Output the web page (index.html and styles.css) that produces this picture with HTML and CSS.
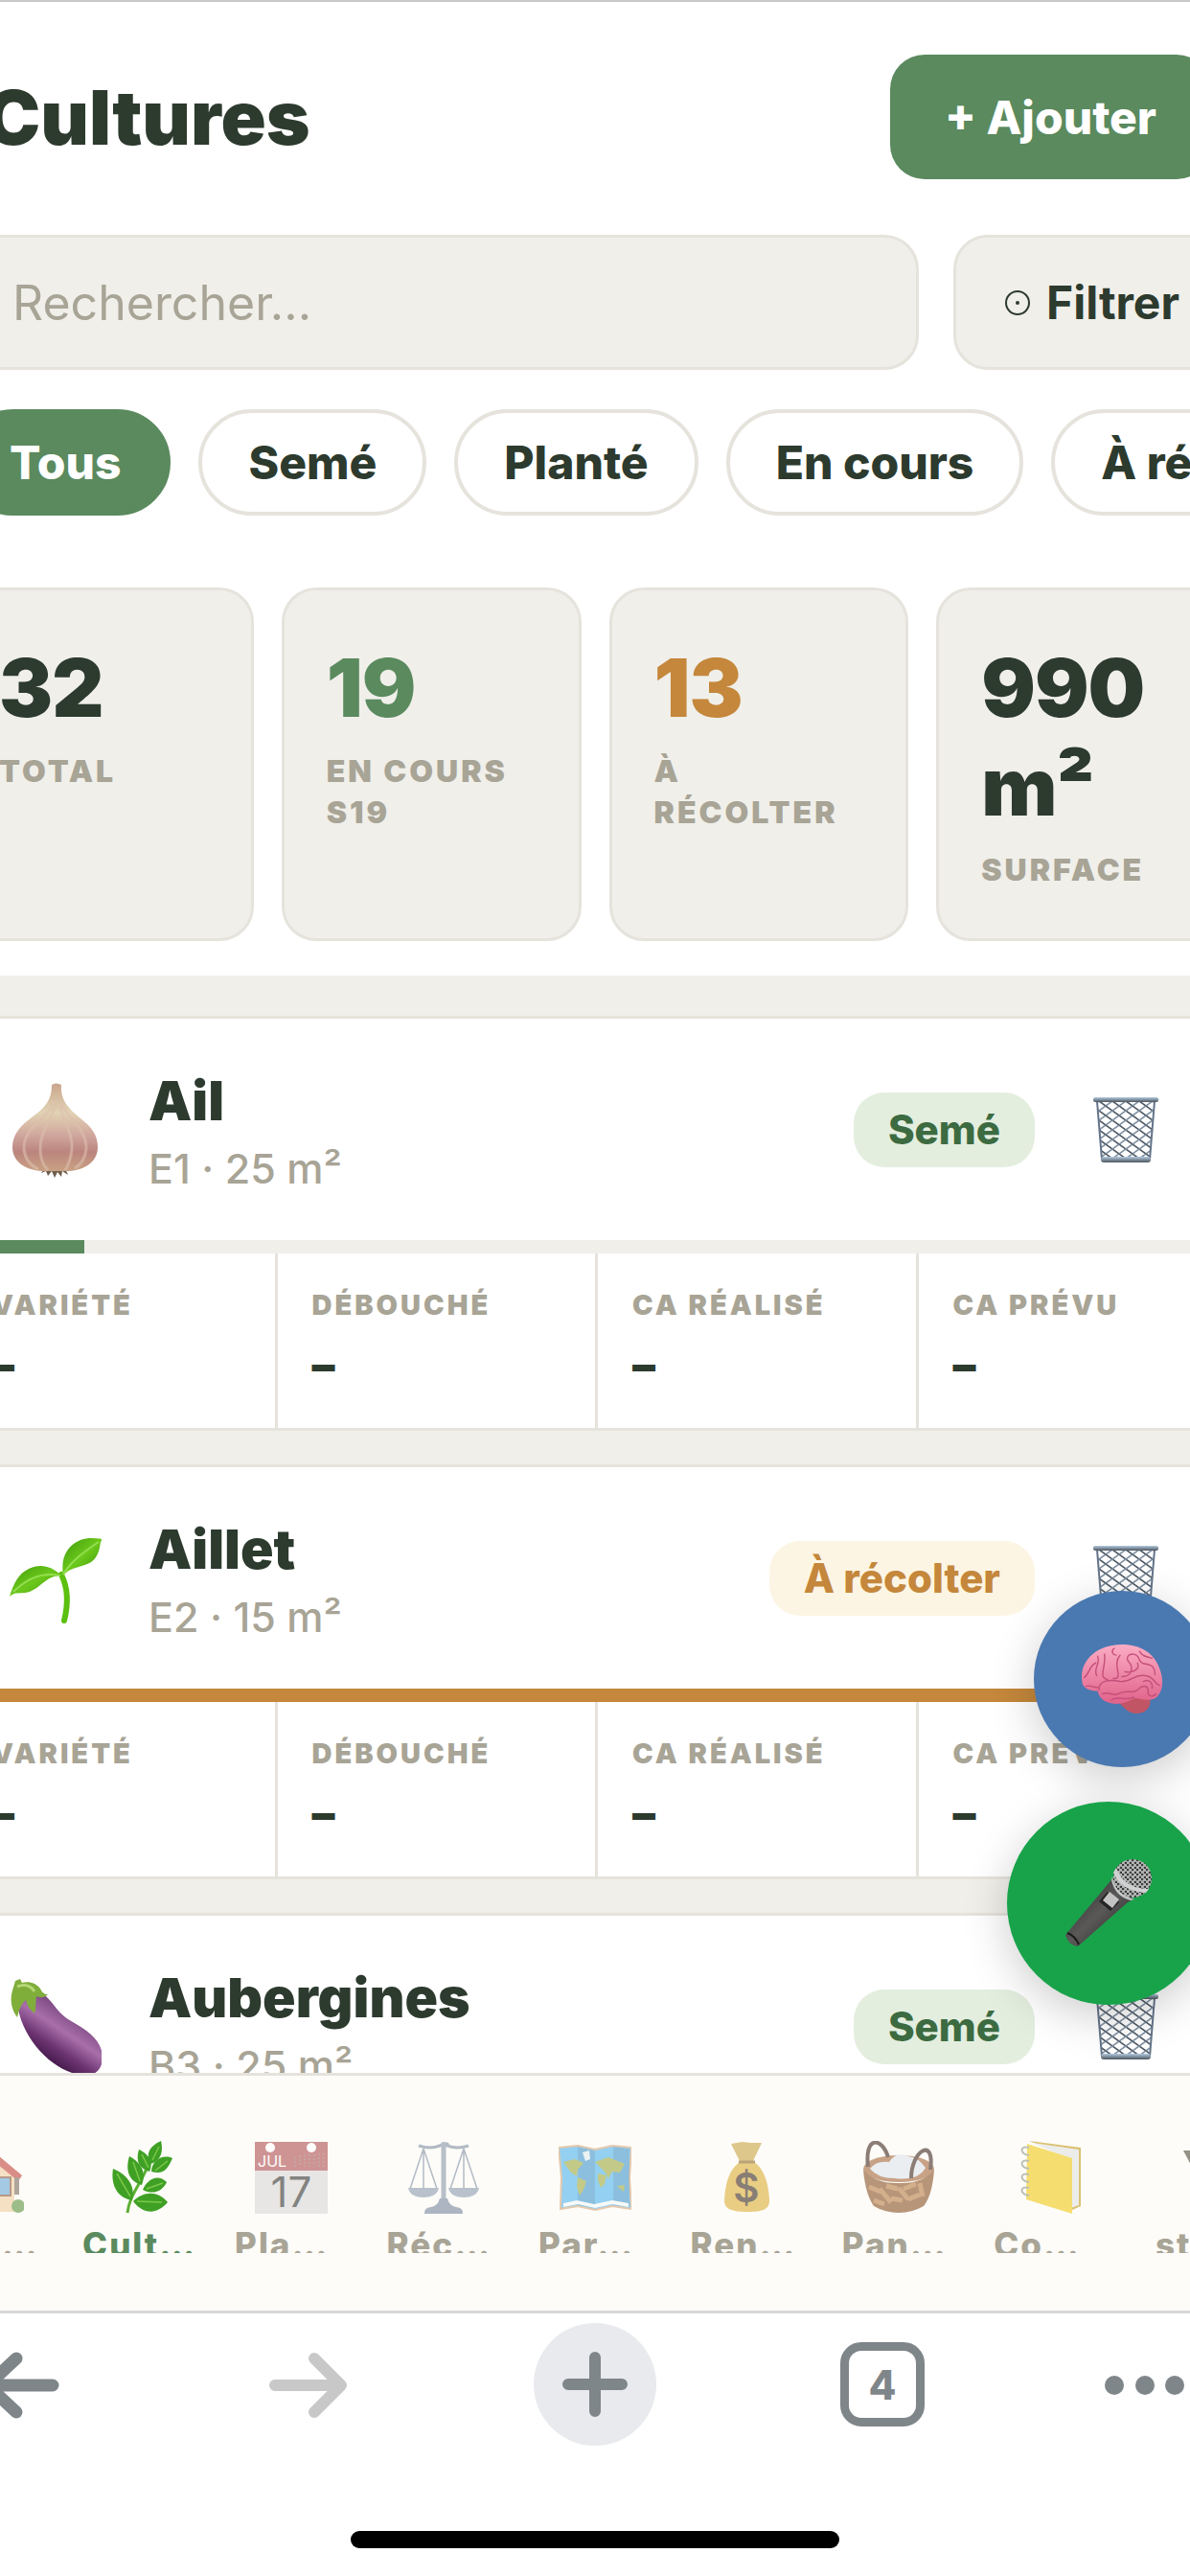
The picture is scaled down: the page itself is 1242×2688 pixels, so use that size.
FILE: index.html
```html
<!DOCTYPE html>
<html lang="fr">
<head>
    <meta charset="UTF-8">
    <meta name="viewport" content="width=device-width, initial-scale=1.0">
    <title>Cultures</title>
    <link rel="stylesheet" href="styles.css">
</head>
<body>
    <!-- icônes réutilisées -->
    <svg class="defs" aria-hidden="true">
        <defs>
            <pattern id="mesh" width="14" height="10" patternUnits="userSpaceOnUse">
                <path d="M0 0L14 10" stroke="#4d5863" stroke-width="1.6"/>
                <path d="M14 0L0 10" stroke="#7f90a2" stroke-width="1.6"/>
            </pattern>
            <linearGradient id="rim" x1="0" x2="0" y1="0" y2="1">
                <stop offset="0" stop-color="#b4cbe0"/>
                <stop offset="1" stop-color="#4c555f"/>
            </linearGradient>
            <symbol id="trash" viewBox="0 0 70 70">
                <path d="M5 5H65L60 66H10Z" fill="url(#mesh)"/>
                <path d="M5 5L10 66M65 5L60 66" stroke="#64748a" stroke-width="2"/>
                <rect x="1" y="1" width="68" height="5" rx="2" fill="url(#rim)"/>
                <rect x="9" y="63" width="52" height="6" rx="3" fill="url(#rim)"/>
            </symbol>
        </defs>
    </svg>

    <div class="screen">
        <main class="main">
            <div class="app">
                <header class="header">
                    <div class="title-row">
                        <h1>Cultures</h1>
                        <button class="btn-add">+ Ajouter</button>
                    </div>
                    <div class="search-row">
                        <input class="search" type="text" placeholder="Rechercher..." aria-label="Rechercher">
                        <button class="btn-filter">
                            <svg width="28" height="28" viewBox="0 0 28 28"><circle cx="14" cy="14" r="12" fill="none" stroke="#2d3a2e" stroke-width="2"/><circle cx="14" cy="14" r="2" fill="#2d3a2e"/></svg>
                            Filtrer
                        </button>
                    </div>
                    <div class="pills">
                        <button class="pill active">Tous</button>
                        <button class="pill">Semé</button>
                        <button class="pill">Planté</button>
                        <button class="pill">En cours</button>
                        <button class="pill">À récolter</button>
                    </div>
                    <div class="stats">
                        <div class="stat">
                            <div class="num">32</div>
                            <div class="lbl">Total</div>
                        </div>
                        <div class="stat">
                            <div class="num green">19</div>
                            <div class="lbl">En cours S19</div>
                        </div>
                        <div class="stat">
                            <div class="num orange">13</div>
                            <div class="lbl">À récolter</div>
                        </div>
                        <div class="stat">
                            <div class="num">990 m²</div>
                            <div class="lbl">Surface</div>
                        </div>
                    </div>
                </header>

                <section class="list">
                    <article class="card">
                        <div class="card-top">
                            <svg class="emoji" viewBox="0 0 96 100">
                                <defs>
                                    <linearGradient id="bulb" x1="0" x2="0" y1="0" y2="1">
                                        <stop offset="0" stop-color="#c9a58c"/>
                                        <stop offset=".33" stop-color="#e2d3b4"/>
                                        <stop offset=".6" stop-color="#cfa59c"/>
                                        <stop offset=".78" stop-color="#bb857e"/>
                                        <stop offset="1" stop-color="#c9a183"/>
                                    </linearGradient>
                                </defs>
                                <path d="M36 91l-3 4 5-2 2 5 4-5 3 7 3-6 4 5 1-6 6 4-3-7z" fill="#6f5d4c"/>
                                <path d="M44 3q4-3 10 0c-1 16 7 24 20 35 12 9 18 18 18 30 0 15-13 24-30 25H34C16 92 3 83 3 68c0-13 8-22 20-31 14-10 21-18 21-34z" fill="url(#bulb)"/>
                                <path d="M47 22C37 40 14 48 15 70c1 10 6 17 15 21M48 24C42 42 32 52 32 70c0 9 3 17 8 22M52 24c5 18 14 30 13 46-1 9-3 16-7 22M53 22c9 16 28 28 27 48-1 10-5 16-12 20" fill="none" stroke="#dcbfae" stroke-width="3" opacity=".6"/>
                            </svg>
                            <div class="info">
                                <h2>Ail</h2>
                                <p>E1 · 25 m²</p>
                            </div>
                            <span class="badge seme">Semé</span>
                            <button class="del" aria-label="Supprimer"><svg><use href="#trash"/></svg></button>
                        </div>
                        <div class="bar"><div class="fill" style="width: 10.2%"></div></div>
                        <div class="cells">
                            <div class="cell"><span>Variété</span><b>–</b></div>
                            <div class="cell"><span>Débouché</span><b>–</b></div>
                            <div class="cell"><span>CA réalisé</span><b>–</b></div>
                            <div class="cell"><span>CA prévu</span><b>–</b></div>
                        </div>
                    </article>

                    <article class="card">
                        <div class="card-top">
                            <svg class="emoji" viewBox="0 0 96 100">
                                <defs>
                                    <linearGradient id="leaf" x1="0" x2="1" y1="0" y2="1">
                                        <stop offset="0" stop-color="#3f9a0c"/>
                                        <stop offset=".5" stop-color="#6cc81b"/>
                                        <stop offset="1" stop-color="#3c930b"/>
                                    </linearGradient>
                                </defs>
                                <path d="M54 46c7 14 7 32 3 48" fill="none" stroke="#5cc010" stroke-width="6" stroke-linecap="round"/>
                                <path d="M56 47C53 28 60 16 74 10c8-3 15-2 23-1-4 4-1 10-7 19-8 12-24 7-34 19z" fill="url(#leaf)"/>
                                <path d="M54 47C44 37 32 34 20 40 9 45 4 56 0 69c5-5 9-3 16-4 16-2 20-18 38-18z" fill="url(#leaf)"/>
                                <path d="M56 46C64 32 78 22 93 12M53 47C34 43 18 50 4 64" fill="none" stroke="#93df50" stroke-width="2"/>
                            </svg>
                            <div class="info">
                                <h2>Aillet</h2>
                                <p>E2 · 15 m²</p>
                            </div>
                            <span class="badge recolter">À récolter</span>
                            <button class="del" aria-label="Supprimer"><svg><use href="#trash"/></svg></button>
                        </div>
                        <div class="bar"><div class="fill orange" style="width: 100%"></div></div>
                        <div class="cells">
                            <div class="cell"><span>Variété</span><b>–</b></div>
                            <div class="cell"><span>Débouché</span><b>–</b></div>
                            <div class="cell"><span>CA réalisé</span><b>–</b></div>
                            <div class="cell"><span>CA prévu</span><b>–</b></div>
                        </div>
                    </article>

                    <article class="card">
                        <div class="card-top">
                            <svg class="emoji" viewBox="0 0 96 100">
                                <defs>
                                    <linearGradient id="egg" x1=".7" x2=".3" y1=".2" y2=".8">
                                        <stop offset="0" stop-color="#6b3a72"/>
                                        <stop offset=".45" stop-color="#a86faa"/>
                                        <stop offset=".75" stop-color="#6a3370"/>
                                        <stop offset="1" stop-color="#43194a"/>
                                    </linearGradient>
                                </defs>
                                <path d="M8 25C10 12 22 8 34 15c12 8 14 20 32 30 16 9 31 20 31 37 0 14-10 21-24 18C44 95 12 62 8 25z" fill="url(#egg)"/>
                                <path d="M6 2l5-2 2 4c8-2 15 1 19 6 2 4 4 6 8 6-4 4-8 4-12 2-1 6 0 12-2 18-5-4-8-9-9-14-4 3-7 9-9 18C2 32 0 22 3 12z" fill="#7fae3a"/>
                                <path d="M8 8c8-3 14-1 18 5" fill="none" stroke="#b5d776" stroke-width="3"/>
                            </svg>
                            <div class="info">
                                <h2>Aubergines</h2>
                                <p>B3 · 25 m²</p>
                            </div>
                            <span class="badge seme">Semé</span>
                            <button class="del" aria-label="Supprimer"><svg><use href="#trash"/></svg></button>
                        </div>
                        <div class="bar"><div class="fill" style="width: 10.2%"></div></div>
                    </article>
                </section>
            </div>

            <div class="fabs">
                <button class="fab blue" aria-label="Assistant">
                    <svg width="86" height="72" viewBox="0 0 84 71">
                        <defs>
                            <linearGradient id="brain" x1="0" x2="0" y1="0" y2="1">
                                <stop offset="0" stop-color="#fbacc4"/>
                                <stop offset="1" stop-color="#e0628b"/>
                            </linearGradient>
                        </defs>
                        <path d="M38 59c10-4 22-6 33-3 1 9-5 15-14 15-8 0-13-6-19-12z" fill="#c25565"/>
                        <path d="M1 38C-2 20 12 4 32 1c24-4 42 6 48 22 6 14 4 26-3 32-8 4-16 1-22 0-9 6-20 8-29 4-6-3-8-7-9-11C9 48 1 45 1 38z" fill="url(#brain)"/>
                        <path d="M3 34c6-4 5-12 12-15M16 32c-4-7 4-12 1-20M27 36c-10-2-1-13-3-26M18 47c0-11 12-11 22-9 12 1 14-8 26-6 10 1 9 9 15 10M33 35c12 1-2-14 7-24M42 33c12 0 11-11 7-15-4-5 1-9 5-8 8 1 3 9 12 10 9 1 10 6 10 11M45 28c8 2 16-3 13-9M22 51c8-4 10 4 18-1 8-4 14 2 20-5 5-4 9-2 9 3-1 6 5 6 8 3M31 57c6-5 14 2 23-3M5 43c4-2 8 2 12 1M64 38c6-3 10 2 9 7M34 4c-4 3-1 7 2 7M60 7c2 5 8 6 13 7" fill="none" stroke="#c4507a" stroke-width="1.4" stroke-linecap="round"/>
                    </svg>
                </button>
                <button class="fab big" aria-label="Dicter">
                    <svg width="92" height="92" viewBox="0 0 92 92">
                        <defs>
                            <pattern id="grille" width="5" height="5" patternUnits="userSpaceOnUse">
                                <rect width="5" height="5" fill="#b4b5b5"/>
                                <circle cx="1" cy="1" r="1.3" fill="#3c3c3c"/>
                                <circle cx="4" cy="4" r="1.3" fill="#3c3c3c"/>
                            </pattern>
                            <linearGradient id="stick" x1="0" x2="1" y1="0" y2="1">
                                <stop offset="0" stop-color="#222"/>
                                <stop offset=".5" stop-color="#5a5958"/>
                                <stop offset="1" stop-color="#1d1d1d"/>
                            </linearGradient>
                        </defs>
                        <path d="M1 79L47 24 50 20 72 42 66 45 14 91Q4 90 1 79z" fill="url(#stick)"/>
                        <path d="M3 77q8 3 12 12" fill="none" stroke="#1a1a1a" stroke-width="2"/>
                        <circle cx="71" cy="20" r="20" fill="url(#grille)"/>
                        <path d="M50 18q2 18 23 24l-4 1Q53 39 49 22z" fill="#c4c6c7"/>
                        <path d="M54 9q8 22 34 22l-3 4Q58 33 51 14z" fill="#cfd1d2"/>
                        <path d="M36 44l9-10 12 11-9 9z" fill="#242424"/>
                        <path d="M40 43l7-9 10 8-7 9z" fill="#c3c3c3"/>
                    </svg>
                </button>
            </div>
        </main>

        <nav class="tabs">
            <a class="tab" href="#">
                <svg viewBox="0 0 76 76">
                    <path d="M10 36L38 14 66 36V74H10z" fill="#f0cfa0"/>
                    <path d="M2 40L38 6 74 36 70 42 38 16 6 44z" fill="#c4453c"/>
                    <rect x="44" y="38" width="18" height="19" fill="#69a8d8" stroke="#8a5a40" stroke-width="2"/>
                    <rect x="66" y="38" width="5" height="18" fill="#7b6d60"/>
                    <circle cx="70" cy="68" r="7" fill="#5d9440"/>
                </svg>
                <span>Acc…</span>
            </a>
            <a class="tab active" href="#">
                <svg viewBox="0 0 76 76">
                    <path d="M25 75C27 56 40 44 48 22" fill="none" stroke="#5cae32" stroke-width="3"/>
                    <g fill="#3fa025">
                        <path d="M60 0C47 6 44 14 49 24 62 20 62 8 60 0z"/>
                        <path d="M37 9C33 22 38 29 48 32 53 21 46 13 37 9z"/>
                        <path d="M72 18C60 13 50 22 50 32 64 36 68 27 72 18z"/>
                        <path d="M27 16C22 32 28 43 40 46 46 30 36 21 27 16z"/>
                        <path d="M66 43C57 34 46 39 41 51 52 57 62 52 66 43z"/>
                        <path d="M10 29C7 48 16 60 30 62 34 44 22 34 10 29z"/>
                        <path d="M67 64C56 51 41 53 31 63 42 78 57 76 67 64z"/>
                    </g>
                    <path d="M58 6L51 20M40 14L47 28M67 21L54 31M31 22L38 42M62 44L45 50M14 34L28 58M61 64L35 63" stroke="#7cc948" stroke-width="1.5"/>
                </svg>
                <span>Cult…</span>
            </a>
            <a class="tab" href="#">
                <svg viewBox="0 0 76 76">
                    <rect y="1" width="76" height="75" fill="#d9d9da"/>
                    <rect y="1" width="76" height="30" fill="#b05052"/>
                    <circle cx="16" cy="7" r="5" fill="#fff"/>
                    <circle cx="59" cy="7" r="5" fill="#fff"/>
                    <text x="3" y="27" font-size="16" fill="#fff">JUL</text>
                    <path d="M42 17v10M47 15v12M52 14v13M57 14v13M62 14v13M67 13v14M72 13v14" stroke="#a06a6c" stroke-width="2" stroke-dasharray="2"/>
                    <text x="38" y="69" font-size="44" text-anchor="middle" fill="#333">17</text>
                </svg>
                <span>Pla…</span>
            </a>
            <a class="tab" href="#">
                <svg viewBox="0 0 76 76">
                    <path d="M12 5Q24 9 34 5t8 0q10 4 22 0" fill="none" stroke="#7f8fa3" stroke-width="3"/>
                    <path d="M38 4V68" stroke="#8a98aa" stroke-width="5"/>
                    <circle cx="38" cy="4" r="3" fill="#8595a9"/>
                    <path d="M17 8L3 50M17 8V50M17 8L31 50M59 8L45 50M59 8V50M59 8L73 50" stroke="#8391a5" stroke-width="1.5"/>
                    <path d="M1 49H33Q31 59 17 59T1 49zM43 49H75Q73 59 59 59T43 49z" fill="#8b9bb0"/>
                    <path d="M34 60h8q2 8 9 9 8 1 7 7H18q-1-6 7-7 7-1 9-9z" fill="#77879d"/>
                </svg>
                <span>Réc…</span>
            </a>
            <a class="tab" href="#">
                <svg viewBox="0 0 76 76">
                    <path d="M0 7L20 5 38 9 56 5 76 7 74 38 76 71 56 68 38 72 20 68 2 71 3 38z" fill="#4fb4ee" stroke="#d5a67c" stroke-width="2"/>
                    <path d="M20 6L38 10V70L20 67zM57 6L74 8V69L57 67z" fill="#2f6f9c" opacity=".4"/>
                    <path d="M5 22l12-3 9 4-6 7-1 7-6-4zM20 38l9 4-3 9-4 6-3-9zM38 22l14-5 17 7-5 9-8-1-4 7-4-7zM41 34l9 2-2 9-4 4-3-8zM61 47l8-1-1 7z" fill="#9da93f"/>
                    <path d="M25 12l7-2 1 9-5 2z" fill="#e2eef4"/>
                    <path d="M5 65l14-3 18 4 19-4 17 3v4l-17-3-18 4-18-4-15 3z" fill="#f4f9fb"/>
                </svg>
                <span>Par…</span>
            </a>
            <a class="tab" href="#">
                <svg viewBox="0 0 76 76">
                    <path d="M22 3l12-2 8 1 12 0-10 21H32z" fill="#cba443"/>
                    <path d="M31 22h15c10 7 15 20 16 40 0 9-6 12-23 12S15 71 15 62c1-20 6-33 16-40z" fill="#dcae37"/>
                    <path d="M30 22h17" stroke="#8d6a25" stroke-width="3"/>
                    <text x="38" y="64" font-size="42" font-weight="600" text-anchor="middle" fill="#3b2b20">$</text>
                </svg>
                <span>Ren…</span>
            </a>
            <a class="tab" href="#">
                <svg viewBox="0 0 76 76">
                    <ellipse cx="38" cy="29" rx="37" ry="14" fill="#a5683c"/>
                    <path d="M8 29q7-9 20-7 8-12 20-6 10 1 18 12-8 14-32 11-18 0-26-10z" fill="#dfe5ec"/>
                    <path d="M1 30q13 15 37 14 25 1 37-14-2 27-11 38-12 7-26 7t-26-7Q3 55 1 30z" fill="#8a5226"/>
                    <path d="M7 48l12 5M25 47l12 3M43 50l13-5M12 62l11 4M30 60l12 2M48 61l12-5M18 50l12 14M38 49l10 12M60 44l3 14" stroke="#b97c46" stroke-width="5"/>
                    <path d="M6 27C2-5 20-5 27 17M51 39C51 10 76-5 71 30" fill="none" stroke="#412a20" stroke-width="4"/>
                </svg>
                <span>Pan…</span>
            </a>
            <a class="tab" href="#">
                <svg viewBox="0 0 76 76">
                    <path d="M16 0L70 7V68L61 72V18z" fill="#c39a1a"/>
                    <path d="M20 2L68 9V67L60 70V20z" fill="#e2e4e2"/>
                    <path d="M14 3L61 18V76L13 61z" fill="#f0c916"/>
                    <path d="M16 7c-10-3-10 7 0 8M16 21c-10-3-10 7 0 8M16 35c-10-3-10 7 0 8M16 49c-10-3-10 7 0 8" fill="none" stroke="#909a86" stroke-width="2"/>
                </svg>
                <span>Co…</span>
            </a>
            <a class="tab" href="#">
                <svg viewBox="0 0 76 76"><path d="M18 10H58L38 48z" fill="#4f4c3c"/></svg>
                <span>stats</span>
            </a>
        </nav>

        <footer class="browser">
            <div class="tools">
                <button aria-label="Retour">
                    <svg width="84" height="84" viewBox="0 0 84 84"><path d="M76 43H10M38 15L8 43 38 71" fill="none" stroke="#7f868a" stroke-width="13" stroke-linecap="round" stroke-linejoin="round"/></svg>
                </button>
                <button aria-label="Suivant">
                    <svg width="84" height="84" viewBox="0 0 84 84"><path d="M8 43H76M49 15L77 43 49 71" fill="none" stroke="#c8c8c8" stroke-width="12" stroke-linecap="round" stroke-linejoin="round"/></svg>
                </button>
                <button class="plus" aria-label="Nouvel onglet">
                    <svg width="72" height="72" viewBox="0 0 72 72"><path d="M8 36H64M36 8V64" stroke="#7f868a" stroke-width="12" stroke-linecap="round"/></svg>
                </button>
                <button class="count" aria-label="Onglets"><span>4</span></button>
                <button aria-label="Menu">
                    <svg width="136" height="24" viewBox="0 0 136 24"><g fill="#7f868a"><circle cx="10" cy="13" r="10"/><circle cx="42" cy="13" r="10"/><circle cx="73" cy="13" r="10"/></g></svg>
                </button>
            </div>
            <div class="home"></div>
        </footer>
    </div>
</body>
</html>
```
FILE: styles.css
```css
* {
    box-sizing: border-box;
}
body {
    margin: 0;
    background-color: #fff;
    color: #2d3a2e;
    font-family: Inter, "Liberation Sans", sans-serif;
}
h1, h2, p {
    margin: 0;
}
button {
    font-family: inherit;
    color: inherit;
    border: none;
    background: none;
    padding: 0;
    white-space: nowrap;
}
.defs {
    position: absolute;
    width: 0;
    height: 0;
}
.screen {
    display: flex;
    flex-direction: column;
    height: 100vh;
    overflow: hidden;
    border-top: 2px solid #c8c8c8;
}
.main {
    position: relative;
    flex: 1;
    min-height: 0;
    overflow: hidden;
    background-color: #f0efea;
}
/* le contenu déborde un peu de chaque côté */
.app {
    margin: 0 -48px;
}

/* en-tête */
.header {
    background-color: #fff;
    padding: 55px 0 36px;
}
.title-row {
    display: flex;
    justify-content: space-between;
    align-items: center;
    height: 130px;
    padding: 0 26px 0 32px;
}
.title-row h1 {
    font-size: 78px;
    font-weight: 900;
}
.btn-add {
    height: 130px;
    padding: 0 57px;
    border-radius: 36px;
    background-color: #5a8a5e;
    color: #fff;
    font-size: 48px;
    font-weight: 800;
}
.search-row {
    display: flex;
    gap: 36px;
    margin-top: 58px;
    padding: 0 6px 0 8px;
}
.search, .btn-filter {
    height: 141px;
    border: 3px solid #e5e3dc;
    border-radius: 36px;
    background-color: #f0efea;
}
.search {
    flex: 1;
    min-width: 0;
    padding: 0 50px;
    font-family: inherit;
    font-size: 50px;
    color: #2d3a2e;
}
.search::placeholder {
    color: #a8a496;
    opacity: 1;
}
.btn-filter {
    display: flex;
    align-items: center;
    gap: 16px;
    padding: 0 50px;
    font-size: 48px;
    font-weight: 700;
}
.pills {
    display: flex;
    gap: 29px;
    margin-top: 41px;
    padding-left: 6px;
}
.pill {
    flex-shrink: 0;
    height: 111px;
    padding: 0 48px;
    border: 4px solid #e5e3dc;
    border-radius: 56px;
    background-color: #fff;
    font-size: 48px;
    font-weight: 800;
}
.pill.active {
    border-color: #5a8a5e;
    background-color: #5a8a5e;
    color: #fff;
}
.stats {
    display: grid;
    grid-template-columns: repeat(4, 1fr);
    gap: 29px;
    margin-top: 75px;
}
.stat {
    min-width: 0;
    padding: 50px 40px 50px 44px;
    border: 3px solid #e5e3dc;
    border-radius: 36px;
    background-color: #f0efea;
}
.num {
    font-size: 84px;
    font-weight: 900;
    line-height: 103px;
    letter-spacing: -1px;
}
.num.green {
    color: #5a8a5e;
}
.num.orange {
    color: #c4873b;
}
.lbl {
    margin-top: 14px;
    color: #a8a496;
    font-size: 32px;
    font-weight: 900;
    line-height: 43px;
    letter-spacing: 3px;
    text-transform: uppercase;
}

/* liste des cultures */
.list {
    display: flex;
    flex-direction: column;
    gap: 35px;
    padding-top: 42px;
}
.card {
    border-top: 3px solid #e5e3dc;
    border-bottom: 3px solid #e5e3dc;
    background-color: #fff;
}
.card-top {
    display: flex;
    align-items: center;
    height: 231px;
    padding: 0 80px 0 58px;
}
.emoji {
    width: 96px;
    height: 100px;
    margin-right: 49px;
}
.info {
    flex: 1;
    padding-top: 12px;
}
.info h2 {
    font-size: 57px;
    font-weight: 900;
    line-height: 68px;
}
.info p {
    color: #a8a496;
    font-size: 43px;
    font-weight: 500;
    line-height: 72px;
}
.badge {
    padding: 0 36px;
    border-radius: 32px;
    font-size: 42px;
    font-weight: 800;
    line-height: 78px;
}
.badge.seme {
    background-color: #e3eedf;
    color: #3d6b41;
}
.badge.recolter {
    background-color: #fdf5e4;
    color: #c4873b;
}
.del {
    width: 70px;
    height: 70px;
    margin-left: 60px;
}
.del svg {
    display: block;
    width: 70px;
    height: 70px;
}
.bar {
    height: 14px;
    background-color: #f0efea;
}
.fill {
    height: 100%;
    background-color: #5a8a5e;
}
.fill.orange {
    background-color: #c4873b;
}
.cells {
    display: grid;
    grid-template-columns: repeat(4, 1fr);
}
.cell {
    display: flex;
    flex-direction: column;
    height: 182px;
    padding: 36px 0 0 36px;
    border-left: 3px solid #e5e3dc;
}
.cell span {
    color: #a8a496;
    font-size: 29px;
    font-weight: 900;
    line-height: 36px;
    letter-spacing: 3px;
    text-transform: uppercase;
}
.cell b {
    margin-top: 16px;
    font-size: 48px;
    font-weight: 900;
    line-height: 56px;
}

/* boutons flottants */
.fabs {
    position: absolute;
    right: -21px;
    bottom: 71px;
    display: flex;
    flex-direction: column;
    align-items: flex-end;
    gap: 36px;
}
.fab {
    display: flex;
    align-items: center;
    justify-content: center;
    width: 184px;
    height: 184px;
    border-radius: 50%;
    box-shadow: 0 12px 48px rgba(0, 0, 0, 0.2);
}
.fab.blue {
    background-color: #4a78b0;
}
.fab.big {
    width: 212px;
    height: 212px;
    background-color: #18a34a;
}

/* navigation */
.tabs {
    display: flex;
    flex-shrink: 0;
    margin: 0 -92px;
    padding-bottom: 60px;
    border-top: 3px solid #e5e3dc;
    background-color: #fdfcf8;
}
.tab {
    display: flex;
    flex: 1;
    flex-direction: column;
    align-items: center;
    height: 185px;
    padding-top: 68px;
    overflow: hidden;
    color: #a8a496;
    text-decoration: none;
}
.tab svg {
    flex-shrink: 0;
    width: 76px;
    height: 76px;
    opacity: 0.6;
}
.tab span {
    min-width: 118px;
    margin-top: 10px;
    font-size: 35px;
    font-weight: 800;
    line-height: 44px;
    letter-spacing: 2px;
}
.tab:last-child span {
    text-align: center;
}
.tab.active {
    color: #5a8a5e;
}
.tab.active svg {
    opacity: 1;
}

/* barre du navigateur */
.browser {
    flex-shrink: 0;
    padding: 10px 0 29px;
    border-top: 3px solid #d8d8d8;
    background-color: #fff;
}
.tools {
    display: grid;
    grid-template-columns: repeat(5, 300px);
    justify-content: center;
    justify-items: center;
    align-items: center;
}
.tools button {
    display: flex;
    align-items: center;
    justify-content: center;
    height: 128px;
}
.tools .plus {
    width: 128px;
    border-radius: 50%;
    background-color: #e8eaed;
}
.tools .count {
    width: 88px;
    height: 88px;
    border: 9px solid #7f868a;
    border-radius: 22px;
    color: #7f868a;
    font-size: 42px;
    font-weight: 800;
}
.home {
    width: 41%;
    height: 18px;
    margin: 89px auto 0;
    border-radius: 9px;
    background-color: #000;
}
```
